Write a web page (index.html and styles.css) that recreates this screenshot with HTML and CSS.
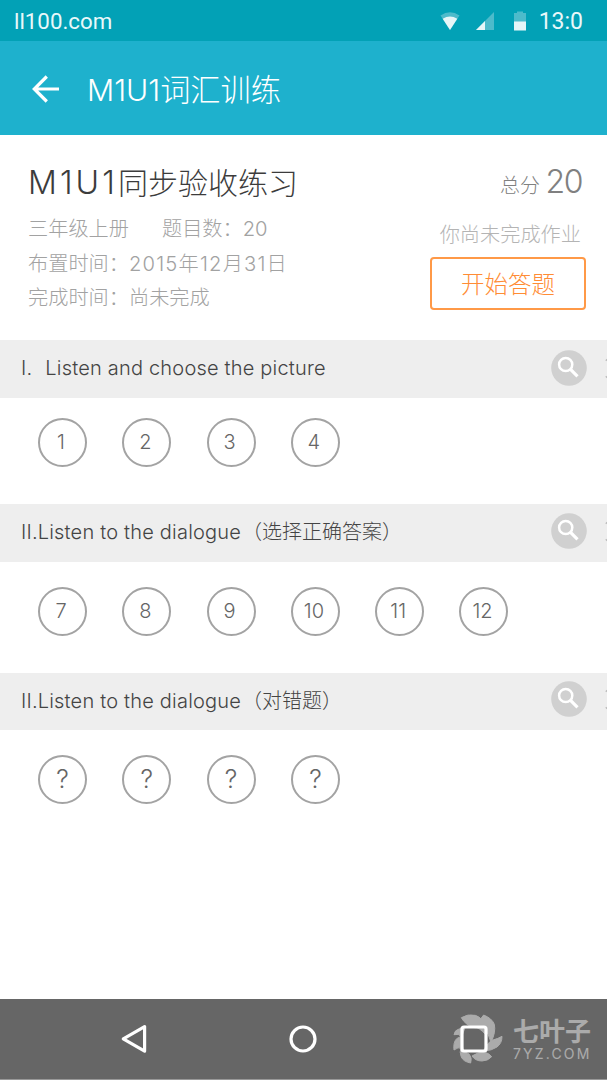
FILE: index.html
```html
<!DOCTYPE html>
<html lang="zh-CN">
<head>
  <meta charset="UTF-8">
  <meta name="viewport" content="width=device-width, initial-scale=1.0">
  <title>M1U1词汇训练</title>
  <link rel="stylesheet" href="styles.css">
</head>
<body>
  <div class="status-bar">
    <span class="carrier">ll100.com</span>
    <svg class="wifi" width="20" height="18" viewBox="0 0 20 18">
      <path d="M0.5 3.5Q10 -3 19.5 3.5L10 18z" fill="#4dbbcb"/>
      <path d="M2.7 6.8Q10 2 17.3 6.8L10 18z" fill="#e6f6f8"/>
    </svg>
    <svg class="signal" width="18" height="18" viewBox="0 0 18 18">
      <path d="M0 18L18 0v18z" fill="#4dbbcb"/>
      <path d="M0 18L9 9v9z" fill="#e6f6f8"/>
    </svg>
    <svg class="battery" width="12" height="20" viewBox="0 0 12 20">
      <path d="M0 2h3V0.5h6V2h3v9H0z" fill="#4dbbcb"/>
      <path d="M0 10.5h12V19.5H0z" fill="#e6f6f8"/>
    </svg>
    <span class="clock">13:0</span>
  </div>

  <header class="app-bar">
    <svg width="28" height="28" viewBox="0 0 28 28" fill="none" stroke="#fff" stroke-width="3.2">
      <path d="M14.8 1.5L2.3 14l12.5 12.5M2.3 14H27"/>
    </svg>
    <h1>M1U1词汇训练</h1>
  </header>

  <div class="summary">
    <div class="info">
      <h2><span>M1U1</span>同步验收练习</h2>
      <p class="grade"><span>三年级上册</span><span>题目数：20</span></p>
      <p class="assigned">布置时间：<span class="date">2015年12月31日</span></p>
      <p class="finished">完成时间：尚未完成</p>
    </div>
    <div class="result">
      <p class="score">总分 <span>20</span></p>
      <p class="hint">你尚未完成作业</p>
      <button>开始答题</button>
    </div>
  </div>

  <section class="first">
    <div class="section-head">
      <h3><span class="number">I.</span>Listen and choose the picture</h3>
      <svg class="search" width="36" height="36" viewBox="0 0 36 36">
        <circle cx="18" cy="18" r="17.8" fill="#d0d0d0"/>
        <circle cx="14.7" cy="14.5" r="6.6" fill="none" stroke="#fff" stroke-width="2.5"/>
        <path d="M19.3 19.1L26.5 26.3" stroke="#fff" stroke-width="3.2"/>
      </svg>
      <svg class="more" width="2" height="22" viewBox="0 0 2 22"><path d="M1 2.5L2 3.5M1 20.5L2 19.5" stroke="#bbb" stroke-width="2"/></svg>
    </div>
    <div class="questions">
      <span>1</span><span>2</span><span>3</span><span>4</span>
    </div>
  </section>

  <section class="second">
    <div class="section-head">
      <h3>II.Listen to the dialogue<span class="type">（选择正确答案）</span></h3>
      <svg class="search" width="36" height="36" viewBox="0 0 36 36">
        <circle cx="18" cy="18" r="17.8" fill="#d0d0d0"/>
        <circle cx="14.7" cy="14.5" r="6.6" fill="none" stroke="#fff" stroke-width="2.5"/>
        <path d="M19.3 19.1L26.5 26.3" stroke="#fff" stroke-width="3.2"/>
      </svg>
      <svg class="more" width="2" height="22" viewBox="0 0 2 22"><path d="M1 2.5L2 3.5M1 20.5L2 19.5" stroke="#bbb" stroke-width="2"/></svg>
    </div>
    <div class="questions">
      <span>7</span><span>8</span><span>9</span><span>10</span><span>11</span><span>12</span>
    </div>
  </section>

  <section class="third">
    <div class="section-head">
      <h3>II.Listen to the dialogue<span class="type">（对错题）</span></h3>
      <svg class="search" width="36" height="36" viewBox="0 0 36 36">
        <circle cx="18" cy="18" r="17.8" fill="#d0d0d0"/>
        <circle cx="14.7" cy="14.5" r="6.6" fill="none" stroke="#fff" stroke-width="2.5"/>
        <path d="M19.3 19.1L26.5 26.3" stroke="#fff" stroke-width="3.2"/>
      </svg>
      <svg class="more" width="2" height="22" viewBox="0 0 2 22"><path d="M1 2.5L2 3.5M1 20.5L2 19.5" stroke="#bbb" stroke-width="2"/></svg>
    </div>
    <div class="questions unknown">
      <span>?</span><span>?</span><span>?</span><span>?</span>
    </div>
  </section>

  <nav class="nav-bar">
    <svg class="back" width="28" height="32" viewBox="0 0 28 32" fill="none" stroke="#fff" stroke-width="3.2">
      <path d="M3.3 15.9L24.6 3.6V28.2z" stroke-linejoin="round"/>
    </svg>
    <svg class="home" width="28" height="28" viewBox="0 0 28 28">
      <circle cx="14" cy="14" r="12" fill="none" stroke="#fff" stroke-width="3.2"/>
    </svg>
    <svg class="recent" width="28" height="28" viewBox="0 0 28 28">
      <rect x="2" y="2" width="24" height="24" rx="2" fill="none" stroke="#fff" stroke-width="3.2"/>
    </svg>
    <div class="watermark">
      <svg width="50" height="50" viewBox="70 73 150 150" fill="#fff" stroke="#fff" stroke-width="3" stroke-linejoin="round">
        <path d="M95 84Q114 72 137 77Q159 84 173 116L167 134Q148 112 135 114Q108 108 95 84z"/>
        <path d="M162 76Q187 86 194 104Q199 128 184 158Q178 134 163 115Q142 95 162 76z"/>
        <path d="M217 140Q217 161 202 172Q187 183 161 184Q174 157 190 151Q205 147 217 140z"/>
        <path d="M186 201Q174 214 157 214Q137 214 127 199Q146 185 167 188Q179 192 186 201z"/>
        <path d="M123 220Q101 216 95 202Q88 188 95 172Q108 189 119 194Q128 205 123 220z"/>
        <path d="M73 181Q70 158 81 147L98 138Q93 160 100 177Q84 170 73 181z"/>
        <path d="M73 135Q75 121 88 118L106 114Q100 130 96 142Q87 130 73 135z"/>
      </svg>
      <div class="brand">
        <strong>七叶子</strong>
        <span>7YZ.COM</span>
      </div>
    </div>
  </nav>
</body>
</html>
```
FILE: styles.css
```css
* {
  box-sizing: border-box;
}
body {
  margin: 0;
  width: 607px;
  height: 1080px;
  overflow: hidden;
  display: flex;
  flex-direction: column;
  font-family: Inter, "Noto Sans CJK SC", sans-serif;
  font-weight: 300;
  background-color: #fff;
  color: #444;
}
h1, h2, h3, p {
  margin: 0;
  font-weight: 300;
  white-space: nowrap;
}
svg {
  display: block;
  flex: none;
}
.status-bar {
  height: 41px;
  flex: none;
  display: flex;
  align-items: center;
  padding: 1px 24px 0 14px;
  background-color: #02a1b6;
  color: #e9f8fa;
  font-family: Roboto, sans-serif;
  font-size: 23px;
  font-weight: 400;
}
.carrier {
  margin-right: auto;
  font-size: 22.3px;
}
.signal {
  margin-left: 16px;
}
.battery {
  margin-left: 20px;
}
.clock {
  margin-left: 13px;
}
.app-bar {
  height: 94px;
  flex: none;
  display: flex;
  align-items: center;
  padding: 2px 0 0 32px;
  background-color: #1eb1cd;
  color: #fff;
}
.app-bar h1 {
  margin-left: 27px;
  padding-bottom: 3px;
  font-size: 30.2px;
}
.summary {
  height: 205px;
  flex: none;
  display: flex;
  justify-content: space-between;
  padding: 26px 21px 0 28px;
}
.info {
  color: #a2a2a2;
  font-size: 20.2px;
}
.info h2 {
  height: 44px;
  line-height: 44px;
  font-size: 30px;
  color: #3c3c3c;
}
.info h2 span {
  font-size: 32px;
  letter-spacing: 3.1px;
}
.info p {
  height: 35px;
  line-height: 47px;
}
.info .finished {
  line-height: 46px;
}
.grade span + span {
  margin-left: 33px;
}
.date {
  letter-spacing: 1.2px;
}
.result {
  display: flex;
  flex-direction: column;
  align-items: flex-end;
}
.score {
  height: 46px;
  line-height: 42px;
  padding-right: 4px;
  font-size: 20px;
  color: #808080;
}
.score span {
  font-size: 32px;
  letter-spacing: -1.5px;
}
.hint {
  height: 50px;
  line-height: 56px;
  padding-right: 5px;
  font-size: 20.2px;
  color: #b4b4b4;
}
.result button {
  width: 156px;
  height: 53px;
  padding: 0 0 2px;
  border: 2px solid #ff9947;
  border-radius: 4px;
  background-color: #fff;
  color: #ff8c35;
  font-family: inherit;
  font-size: 23.5px;
  font-weight: 300;
}
.first {
  height: 164px;
}
.second {
  height: 168.5px;
}
.section-head {
  height: 57.5px;
  display: flex;
  align-items: center;
  padding: 0 0 4px 21px;
  background-color: #eee;
}
.first .section-head {
  padding-bottom: 1px;
}
.section-head h3 {
  flex: 1;
  font-size: 20px;
  letter-spacing: 0.2px;
}
.number {
  margin-right: 13px;
}
.type {
  margin-left: 1px;
  letter-spacing: 0;
}
.more {
  margin-left: 18px;
}
.questions {
  display: flex;
  gap: 35.3px;
  padding: 25px 0 0 38px;
}
.first .questions {
  padding-top: 20px;
}
.questions span {
  width: 49px;
  height: 49px;
  flex: none;
  border: 2px solid #a3a3a3;
  border-radius: 50%;
  line-height: 45px;
  padding-right: 3px;
  text-align: center;
  font-size: 20px;
  color: #666;
}
.questions.unknown span {
  padding-right: 0;
  font-size: 25px;
}
.nav-bar {
  height: 81px;
  margin-top: auto;
  flex: none;
  display: flex;
  align-items: center;
  position: relative;
  padding-left: 120px;
  background-color: #666;
  border-bottom: 1px solid #999;
}
.home {
  margin-left: 141px;
}
.recent {
  margin-left: 143px;
}
.watermark {
  position: absolute;
  left: 453px;
  top: 15px;
  display: flex;
  gap: 10px;
  color: #fff;
  opacity: 0.45;
}
.brand {
  display: flex;
  flex-direction: column;
}
.brand strong {
  height: 31px;
  line-height: 35px;
  font-size: 26px;
  font-weight: 700;
}
.brand span {
  font-size: 14px;
  font-weight: 400;
  letter-spacing: 2.2px;
  line-height: 17px;
}
```
